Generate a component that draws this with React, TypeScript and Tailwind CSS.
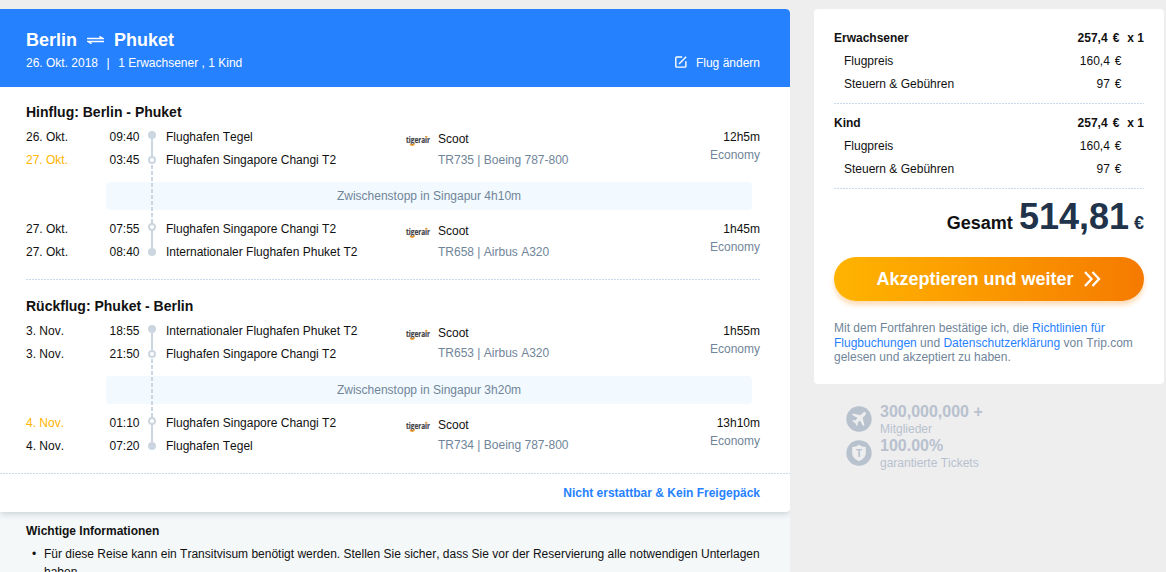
import clsx from "clsx";

interface Stop {
  date: string;
  time: string;
  airport: string;
  nextDay?: boolean;
}

interface Segment {
  from: Stop;
  to: Stop;
  flight: string;
  duration: string;
}

interface Journey {
  title: string;
  segments: [Segment, Segment];
  stopover: string;
  tight?: boolean;
}

const journeys: Journey[] = [
  {
    title: "Hinflug: Berlin - Phuket",
    segments: [
      {
        from: { date: "26. Okt.", time: "09:40", airport: "Flughafen Tegel" },
        to: { date: "27. Okt.", time: "03:45", airport: "Flughafen Singapore Changi T2", nextDay: true },
        flight: "TR735 | Boeing 787-800",
        duration: "12h5m",
      },
      {
        from: { date: "27. Okt.", time: "07:55", airport: "Flughafen Singapore Changi T2" },
        to: { date: "27. Okt.", time: "08:40", airport: "Internationaler Flughafen Phuket T2" },
        flight: "TR658 | Airbus A320",
        duration: "1h45m",
      },
    ],
    stopover: "Zwischenstopp in Singapur 4h10m",
  },
  {
    title: "Rückflug: Phuket - Berlin",
    segments: [
      {
        from: { date: "3. Nov.", time: "18:55", airport: "Internationaler Flughafen Phuket T2" },
        to: { date: "3. Nov.", time: "21:50", airport: "Flughafen Singapore Changi T2" },
        flight: "TR653 | Airbus A320",
        duration: "1h55m",
      },
      {
        from: { date: "4. Nov.", time: "01:10", airport: "Flughafen Singapore Changi T2", nextDay: true },
        to: { date: "4. Nov.", time: "07:20", airport: "Flughafen Tegel" },
        flight: "TR734 | Boeing 787-800",
        duration: "13h10m",
      },
    ],
    stopover: "Zwischenstopp in Singapur 3h20m",
    tight: true,
  },
];

const passengers = ["Erwachsener", "Kind"];

function DashedLine({ className }: { className?: string }) {
  return (
    <div
      className={clsx(
        "h-px bg-[repeating-linear-gradient(90deg,#c9daea_0_2px,transparent_2px_3px)]",
        className
      )}
    />
  );
}

function AirlineLogo() {
  return (
    <svg className="w-[26px] h-3 overflow-visible" viewBox="0 0 26 12">
      <text
        x="0"
        y="8"
        fontSize="8.6"
        fontWeight="bold"
        fontFamily="'Open Sans', sans-serif"
        textLength="24"
        lengthAdjust="spacingAndGlyphs"
        fill="#3f4247"
        stroke="#3f4247"
        strokeWidth="0.2"
      >
        tigerair
      </text>
      <path d="M4.3 8.8c.3 2 3.8 2 4.1-.4" fill="none" stroke="#f5a02c" strokeWidth="1.5" />
      <circle cx="20.5" cy="1.7" r="1" fill="#f5a02c" />
    </svg>
  );
}

function Dot({ hollow }: { hollow?: boolean }) {
  return (
    <div
      className={clsx(
        "size-2 shrink-0 rounded-full border-2 border-[#ccd6e0]",
        !hollow && "bg-[#ccd6e0]"
      )}
    />
  );
}

function StopRow({ stop }: { stop: Stop }) {
  return (
    <div className="flex h-[23px] leading-[23px]">
      <span className={clsx("w-[83.5px]", stop.nextDay && "text-[#ffb400]")}>{stop.date}</span>
      <span className="w-[56.5px]">{stop.time}</span>
      <span>{stop.airport}</span>
    </div>
  );
}

function SegmentRow({ segment, last, tight }: { segment: Segment; last?: boolean; tight?: boolean }) {
  return (
    <div className="relative flex h-[46px]">
      <div className="w-[380px]">
        <StopRow stop={segment.from} />
        <StopRow stop={segment.to} />
      </div>
      <div className="absolute top-[5px] left-[122px] flex h-[33px] flex-col items-center">
        <Dot hollow={last} />
        <div className="w-0.5 flex-1 bg-[#ccd6e0]" />
        <Dot hollow={!last} />
      </div>
      <div className="w-8 pt-[9px]">
        <AirlineLogo />
      </div>
      <div className="flex-1 pt-[3px] leading-[21px]">
        <p>Scoot</p>
        <p className={clsx("text-[#708599]", tight && "leading-[19px]")}>{segment.flight}</p>
      </div>
      <div className="pt-0.5 text-right leading-[18px]">
        <p>{segment.duration}</p>
        <p className="text-[#708599]">Economy</p>
      </div>
    </div>
  );
}

function JourneyBlock({ journey }: { journey: Journey }) {
  return (
    <section>
      <h2 className="h-[26px] text-sm leading-6 font-bold">{journey.title}</h2>
      <SegmentRow segment={journey.segments[0]} tight={journey.tight} />
      <div className="relative mt-2.5 mr-2 mb-2 ml-20 h-7 rounded bg-[#f2f9ff] text-center leading-7 text-[#708599]">
        {journey.stopover}
        <div className="absolute -top-[17px] left-[45px] h-[59px] w-0.5 bg-[repeating-linear-gradient(180deg,#ccd6e0_0_4px,transparent_4px_6px)]" />
      </div>
      <SegmentRow segment={journey.segments[1]} tight={journey.tight} last />
    </section>
  );
}

function FareBlock({ label }: { label: string }) {
  return (
    <div className="leading-[23px]">
      <div className="flex justify-between font-bold">
        <span>{label}</span>
        <span>
          257,4<span className="ml-[5px]">€</span>
          <span className="ml-2">x 1</span>
        </span>
      </div>
      <div className="flex justify-between pr-[22.5px] pl-2.5">
        <span>Flugpreis</span>
        <span>
          160,4<span className="ml-[5px]">€</span>
        </span>
      </div>
      <div className="flex justify-between pr-[22.5px] pl-2.5">
        <span>Steuern &amp; Gebühren</span>
        <span>
          97<span className="ml-[5px]">€</span>
        </span>
      </div>
    </div>
  );
}

export default function App() {
  return (
    <div className="flex h-[572px] w-[1166px] items-start gap-6 overflow-hidden bg-[#eee] pt-[9px] font-['Liberation_Sans',Arial,sans-serif] text-xs text-[#111] [font-kerning:none]">
      <main className="h-[563px] w-[790px] shrink-0 overflow-hidden rounded-tr bg-[#f4f8f9]">
        <div className="rounded-r bg-white shadow-[0_2px_6px_rgba(40,60,80,0.2)]">
          <header className="flex h-[78px] items-end justify-between rounded-tr bg-[#2681ff] pr-[30px] pb-[15px] pl-[26px] text-white">
            <div>
              <h1 className="flex h-7 items-center text-lg leading-7 font-bold">
                Berlin
                <svg className="mx-2.5 h-2 w-[17px]" viewBox="0 0 17 8" fill="none" stroke="currentColor" strokeWidth="1.4">
                  <path d="M0 2.5H16L12.4 0.4M17 5.5H1L4.6 7.6" />
                </svg>
                Phuket
              </h1>
              <p className="leading-[18px]">
                26. Okt. 2018<span className="mx-[8.5px]">|</span>1 Erwachsener , 1 Kind
              </p>
            </div>
            <a className="flex items-center leading-[18px]">
              <svg className="mr-[9px] mb-0.5 h-3 w-3" viewBox="0 0 12 12" fill="none" stroke="currentColor" strokeWidth="1.4">
                <path d="M7.2 1H1.7Q.8 1 .8 1.9V10.2Q.8 11.1 1.7 11.1H10Q10.9 11.1 10.9 10.2V5.2" />
                <path d="M4 8L11.2.8" />
              </svg>
              Flug ändern
            </a>
          </header>
          <div className="pt-[13px] pr-[30px] pl-[26px]">
            <JourneyBlock journey={journeys[0]} />
            <DashedLine className="mt-[15px] mb-[14px]" />
            <JourneyBlock journey={journeys[1]} />
          </div>
          <DashedLine className="mt-[15px]" />
          <p className="h-[38px] pr-[30px] text-right leading-[38px] font-bold text-[#2681ff]">
            Nicht erstattbar &amp; Kein Freigepäck
          </p>
        </div>
        <div className="pt-2.5 pr-[26px] pl-[26px]">
          <h3 className="leading-[18px] font-bold">Wichtige Informationen</h3>
          <div className="flex pt-[5px] pl-1.5 leading-[18px]">
            <span className="w-3 shrink-0">•</span>
            <p>
              Für diese Reise kann ein Transitvisum benötigt werden. Stellen Sie sicher, dass Sie vor der Reservierung alle notwendigen Unterlagen haben.
            </p>
          </div>
        </div>
      </main>

      <aside className="w-[350px] shrink-0">
        <div className="h-[375px] rounded bg-white px-5 pt-[18px]">
          {passengers.map((label) => (
            <div key={label}>
              <FareBlock label={label} />
              <DashedLine className="mt-[7px] mb-2" />
            </div>
          ))}
          <div className="flex h-[60px] items-baseline justify-end text-lg font-bold">
            <span>Gesamt</span>
            <span className="mr-[5px] ml-1.5 text-4xl text-[#20334a]">514,81</span>
            <span className="text-[#20334a]">€</span>
          </div>
          <button className="flex h-11 w-full items-center justify-center rounded-full bg-linear-to-r from-[#ffb400] to-[#f57a00] text-lg font-bold text-white shadow-[0_4px_5px_rgba(250,140,20,0.3)]">
            Akzeptieren und weiter
            <svg className="ml-2.5 h-4 w-[18px]" viewBox="0 0 18 16" fill="none" stroke="currentColor" strokeWidth="2.3">
              <path d="M1 1L7.5 8L1 15M8.5 1L15 8L8.5 15" />
            </svg>
          </button>
          <p className="pt-5 leading-[14.5px] text-[#708599]">
            Mit dem Fortfahren bestätige ich, die <a className="text-[#2681ff]">Richtlinien für Flugbuchungen</a> und{" "}
            <a className="text-[#2681ff]">Datenschutzerklärung</a> von Trip.com gelesen und akzeptiert zu haben.
          </p>
        </div>

        <div className="pt-[19px] pl-8 text-[#b8c1ce]">
          <div className="flex h-[34px] gap-2">
            <svg className="mt-[3px] size-[26px]" viewBox="0 0 26 26">
              <circle cx="13" cy="13" r="12.7" fill="#b8c1ce" />
              <path
                d="M19.6 6.4c-.8-.7-2-.3-2.8.5l-2.5 2.4-7.2-1.7-1.2 1.2 5.7 3.1-2.3 2.5-2.2-.3-1 1 3 1.8 1.7 3 1-1-.2-2.2 2.4-2.3 3.1 5.7 1.3-1.2-1.8-7.2 2.5-2.5c.8-.8 1.1-2.1.5-2.8z"
                fill="#eee"
              />
            </svg>
            <div>
              <p className="text-base leading-[18px] font-bold">300,000,000 +</p>
              <p className="leading-4">Mitglieder</p>
            </div>
          </div>
          <div className="flex h-[34px] gap-2">
            <svg className="mt-[3px] size-[26px]" viewBox="0 0 26 26">
              <circle cx="13" cy="13" r="12.7" fill="#b8c1ce" />
              <path d="M13 4.8c2.2 1.6 4.4 2.1 6.8 2.2v6.3c0 3.6-3.2 6.3-6.8 7.9-3.6-1.6-6.8-4.3-6.8-7.9V7c2.4-.1 4.6-.6 6.8-2.2z" fill="#eee" />
              <text x="13" y="16.7" textAnchor="middle" fontSize="10" fontWeight="bold" fill="#b8c1ce">
                T
              </text>
            </svg>
            <div>
              <p className="text-base leading-[18px] font-bold">100.00%</p>
              <p className="leading-4">garantierte Tickets</p>
            </div>
          </div>
        </div>
      </aside>
    </div>
  );
}
